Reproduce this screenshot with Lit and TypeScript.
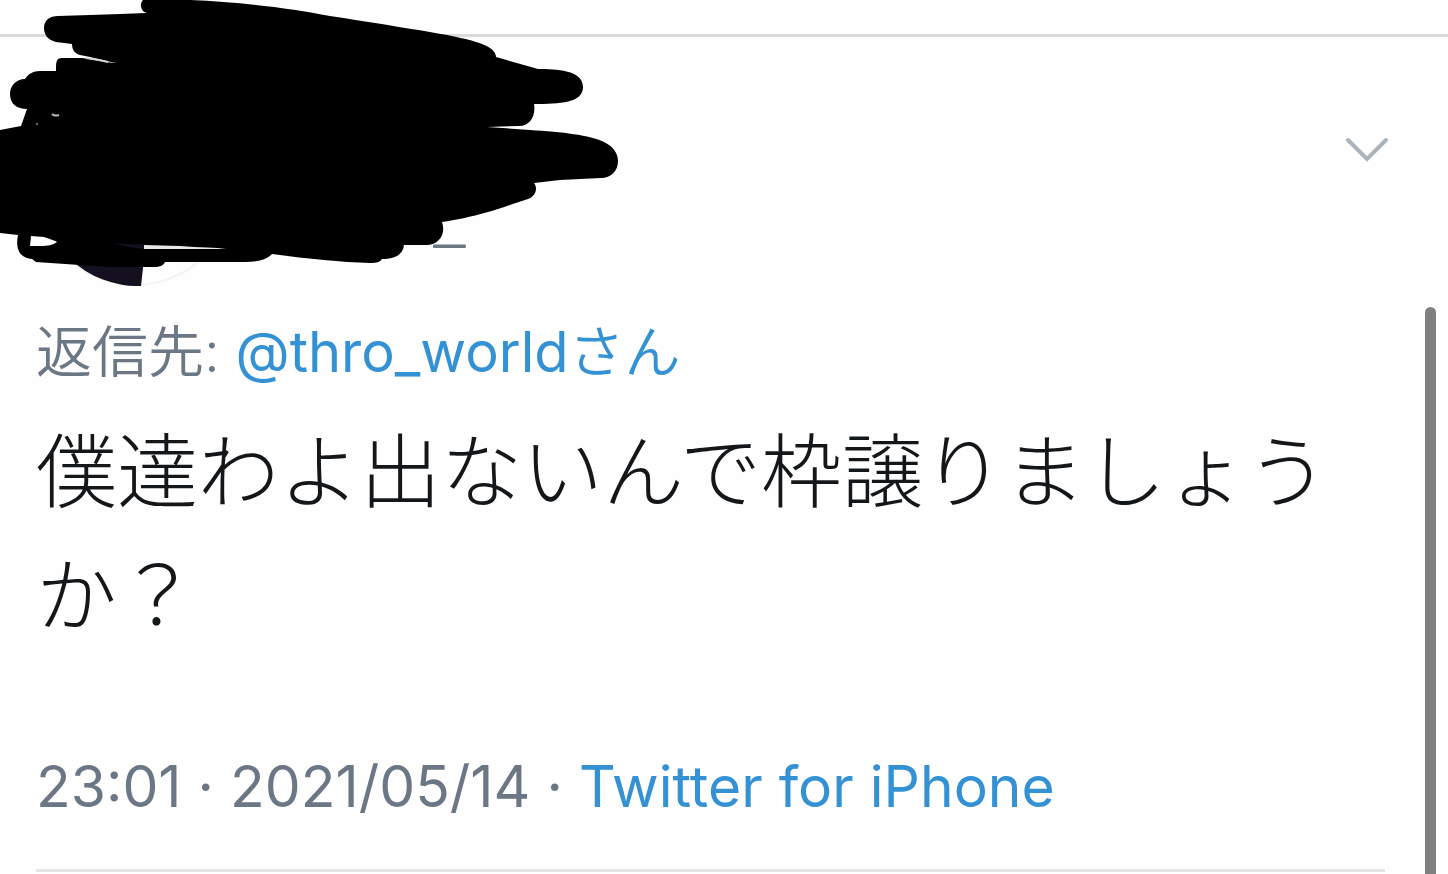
import { LitElement, html, css } from "lit";
import { customElement } from "lit/decorators.js";

@customElement("tweet-avatar")
class TweetAvatar extends LitElement {
  static styles = css`
    :host { display: block; flex: none; }
    .disc { display: block; width: 198px; height: 198px; }
  `;

  render() {
    return html`
      <svg class="disc" viewBox="0 0 198 198" aria-hidden="true">
        <circle cx="99" cy="99" r="98" fill="#fefefe" stroke="#f3f3f4" stroke-width="2" />
        <path d="M107 0 L107 180 L105 198 A99 99 0 0 1 99 0 Z" fill="#14101f" />
      </svg>
    `;
  }
}

@customElement("marker-scribble")
class MarkerScribble extends LitElement {
  static styles = css`
    :host { display: block; pointer-events: none; }
    .ink { display: block; width: 630px; height: 270px; }
  `;

  render() {
    return html`
      <svg class="ink" viewBox="0 0 630 270" aria-hidden="true">
        <path
          fill="#000"
          d="M143 0 L190 0 C240 2 290 8 330 16 C375 23 420 30 452 36 C475 41 496 46 496 57
             L538 69 C556 69 583 70 583 87 C583 103 560 104 534 104
             C536 116 530 126 519 126 L487 127 L530 130
             C562 132 590 135 604 142 C614 147 618 154 618 161 C618 171 611 178 601 178
             L560 180 L534 183 C538 188 536 196 528 199 C512 204 500 209 488 212
             C470 217 456 220 442 222 C446 233 440 245 426 245 L404 245
             C403 254 396 259 382 259 C380 262 377 263 370 263
             C340 262 310 259 272 254 C268 259 258 262 245 262 L165 262
             C164 265 160 267 154 267 L110 267 C85 265 60 264 36 262 L32 259
             C20 258 15 249 18 235 L0 233 L0 130 L21 126 L27 109
             C17 109 10 104 10 94 C10 86 16 79 25 79 C28 74 33 71 40 71 L56 71
             C56 62 56 58 62 58 L82 58 C98 60 108 63 117 63
             C104 61 92 57 80 55 C74 53 72 49 72 44 L56 42
             C48 40 44 35 44 28 C44 20 50 16 58 16 L90 15 L120 14 L147 13
             C141 12 139 4 143 0 Z"
        />
        <path d="M31 236 L44 237 C50 239 56 241 57 242 C53 245 48 246 40 246 L30 246 Z" fill="#fefefe" />
        <path d="M144 245 L180 246 C200 248 216 247 226 249 L144 249 Z" fill="#e8e8e8" />
        <path d="M112 243 C124 244 134 245 144 244 L144 249 C132 248 124 245 112 243 Z" fill="#14101f" />
        <path d="M86 58 L99 60 L108 62" fill="none" stroke="#d5d5d5" stroke-width="2" />
        <path d="M52 114 C54 116 56 116 59 115" fill="none" stroke="#bbb" stroke-width="2" />
        <circle cx="37" cy="124" r="1" fill="#888" />
      </svg>
    `;
  }
}

@customElement("app-root")
class AppRoot extends LitElement {
  static styles = css`
    :host {
      display: block;
      position: relative;
      box-sizing: border-box;
      min-height: 100vh;
      overflow: hidden;
      padding-top: 34px;
      background: #fefefe;
      color: #14171a;
      font-family: Inter, "Noto Sans CJK JP", sans-serif;
      font-size: 56px;
      line-height: 72px;
    }
    .tweet { border-top: 3px solid #d9dbdd; padding: 0 63px 0 36px; }
    .head { display: flex; align-items: flex-start; padding-top: 51px; }
    .handle {
      flex: 1;
      margin: 94px 0 0 200px;
      color: #6b7784;
      font-family: "Liberation Sans", sans-serif;
    }
    .more {
      flex: none;
      margin: 49px -4px 0 0;
      padding: 0;
      border: 0;
      background: none;
      cursor: pointer;
    }
    .chevron { display: block; width: 44px; height: 28px; }
    .reply, .body, .meta { margin: 0; }
    .reply { margin-top: 30px; color: #6b7784; font-weight: 350; }
    .link { color: #3492d4; text-decoration: none; font-weight: 400; }
    .kana { font-weight: 350; }
    .body { margin-top: 22px; font-size: 81px; line-height: 124px; font-weight: 300; }
    .meta {
      margin-top: 93px;
      padding-bottom: 46px;
      border-bottom: 3px solid #e3e4e6;
      color: #6b7784;
      font-size: 57px;
    }
    .marker { position: absolute; left: 0; top: 0; }
    .thumb {
      position: absolute;
      right: 12px;
      top: 307px;
      bottom: 0;
      width: 11px;
      border-radius: 6px 6px 0 0;
      background: #808080;
    }
  `;

  render() {
    return html`
      <article class="tweet">
        <header class="head">
          <tweet-avatar></tweet-avatar>
          <span class="handle">_</span>
          <button class="more" type="button" aria-label="その他">
            <svg class="chevron" viewBox="0 0 44 28" aria-hidden="true">
              <path d="M3 3 L22 22 L41 3" fill="none" stroke="#aab4bc" stroke-width="4" stroke-linecap="round" />
            </svg>
          </button>
        </header>
        <p class="reply">返信先: <a class="link" href="#">@thro_world<span class="kana">さん</span></a></p>
        <p class="body">僕達わよ出ないんで枠譲りましょうか？</p>
        <p class="meta">
          <time datetime="2021-05-14T23:01">23:01 · 2021/05/14</time> · <a class="link" href="#">Twitter for iPhone</a>
        </p>
      </article>
      <marker-scribble class="marker"></marker-scribble>
      <div class="thumb"></div>
    `;
  }
}
